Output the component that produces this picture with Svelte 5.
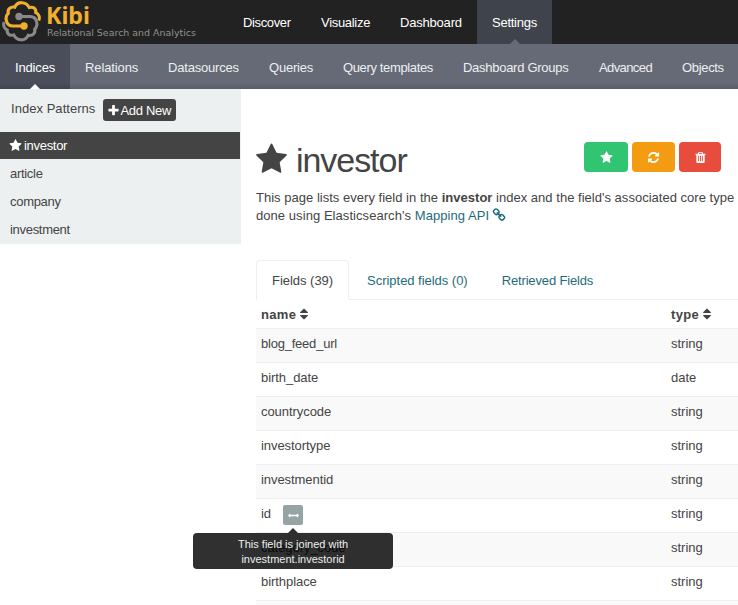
<script>
  const mainNav = [
    { label: 'Discover', width: 78, tracking: -0.37 },
    { label: 'Visualize', width: 79, tracking: -0.3 },
    { label: 'Dashboard', width: 92, tracking: -0.2 },
    { label: 'Settings', width: 75, tracking: -0.25 }
  ];
  const subNav = [
    { label: 'Indices', width: 70, tracking: -0.15 },
    { label: 'Relations', width: 83, tracking: -0.12 },
    { label: 'Datasources', width: 101, tracking: -0.2 },
    { label: 'Queries', width: 74, tracking: -0.22 },
    { label: 'Query templates', width: 120, tracking: -0.36 },
    { label: 'Dashboard Groups', width: 136, tracking: -0.28 },
    { label: 'Advanced', width: 83, tracking: -0.6 },
    { label: 'Objects', width: 72, tracking: -0.33 }
  ];
  const patterns = ['investor', 'article', 'company', 'investment'];
  const tabs = ['Fields (39)', 'Scripted fields (0)', 'Retrieved Fields'];
  const fields = [
    ['blog_feed_url', 'string'],
    ['birth_date', 'date'],
    ['countrycode', 'string'],
    ['investortype', 'string'],
    ['investmentid', 'string'],
    ['id', 'string'],
    ['category_code', 'string'],
    ['birthplace', 'string'],
    ['', '']
  ];
  const icons = {
    star: 'M1728 647q0 22-26 48l-363 354 86 500q1 7 1 20 0 21-10.5 35.5t-30.5 14.5q-19 0-40-12l-449-236-449 236q-22 12-40 12-21 0-31.5-14.5t-10.5-35.5q0-6 2-20l86-500-364-354q-25-27-25-48 0-37 56-46l502-73 225-455q19-41 49-41t49 41l225 455 502 73q56 9 56 46z',
    plus: 'M1600 736v192q0 40-28 68t-68 28h-416v416q0 40-28 68t-68 28h-192q-40 0-68-28t-28-68v-416h-416q-40 0-68-28t-28-68v-192q0-40 28-68t68-28h416v-416q0-40 28-68t68-28h192q40 0 68 28t28 68v416h416q40 0 68 28t28 68z',
    refresh: 'M1639 1056q0 5-1 7-64 268-268 434.5t-478 166.5q-146 0-282.5-55t-243.5-157l-129 129q-19 19-45 19t-45-19-19-45v-448q0-26 19-45t45-19h448q26 0 45 19t19 45-19 45l-137 137q71 66 161 102t187 36q134 0 250-65t186-179q11-17 53-117 8-23 30-23h192q13 0 22.5 9.5t9.5 22.5zm25-800v448q0 26-19 45t-45 19h-448q-26 0-45-19t-19-45 19-45l138-138q-148-137-349-137-134 0-250 65t-186 179q-11 17-53 117-8 23-30 23h-199q-13 0-22.5-9.5t-9.5-22.5v-7q65-268 270-434.5t480-166.5q146 0 284 55.5t245 156.5l130-129q19-19 45-19t45 19 19 45z',
    trash: 'M704 1376v-704q0-14-9-23t-23-9h-64q-14 0-23 9t-9 23v704q0 14 9 23t23 9h64q14 0 23-9t9-23zm256 0v-704q0-14-9-23t-23-9h-64q-14 0-23 9t-9 23v704q0 14 9 23t23 9h64q14 0 23-9t9-23zm256 0v-704q0-14-9-23t-23-9h-64q-14 0-23 9t-9 23v704q0 14 9 23t23 9h64q14 0 23-9t9-23zm-544-992h448l-48-117q-7-9-17-11h-317q-10 2-17 11zm928 32v64q0 14-9 23t-23 9h-96v948q0 83-47 143.5t-113 60.5h-832q-66 0-113-58.5t-47-141.5v-952h-96q-14 0-23-9t-9-23v-64q0-14 9-23t23-9h309l70-167q15-37 54-63t79-26h320q40 0 79 26t54 63l70 167h309q14 0 23 9t9 23z',
    sort: 'M1408 1088q0 26-19 45l-448 448q-19 19-45 19t-45-19l-448-448q-19-19-19-45t19-45 45-19h896q26 0 45 19t19 45zm0-384q0 26-19 45t-45 19h-896q-26 0-45-19t-19-45 19-45l448-448q19-19 45-19t45 19l448 448q19 19 19 45z',
    link: 'M1520 1216q0-40-28-68l-208-208q-28-28-68-28-42 0-72 32 3 3 19 18.5t21.5 21.5 15 19 13 25.5 3.5 27.5q0 40-28 68t-68 28q-15 0-27.5-3.5t-25.5-13-19-15-21.5-21.5-18.5-19q-33 31-33 73 0 40 28 68l206 207q27 27 68 27 40 0 68-26l147-146q28-28 28-67zm-703-705q0-40-28-68l-206-207q-28-28-68-28-39 0-68 27l-147 146q-28 28-28 67 0 40 28 68l208 208q27 27 68 27 42 0 72-31-3-3-19-18.5t-21.5-21.5-15-19-13-25.5-3.5-27.5q0-40 28-68t68-28q15 0 27.5 3.5t25.5 13 19 15 21.5 21.5 18.5 19q33-31 33-73zm895 705q0 120-85 203l-147 146q-83 83-203 83-121 0-204-85l-206-207q-83-83-83-203 0-123 88-209l-88-88q-86 88-208 88-120 0-204-84l-208-208q-84-84-84-204t85-203l147-146q83-83 203-83 121 0 204 85l206 207q83 83 83 203 0 123-88 209l88 88q86-88 208-88 120 0 204 84l208 208q84 84 84 204z',
    arrows: 'M1792 896q0 26-19 45l-256 256q-19 19-45 19t-45-19-19-45v-128h-1024v128q0 26-19 45t-45 19-45-19l-256-256q-19-19-19-45t19-45l256-256q19-19 45-19t45 19 19 45v128h1024v-128q0-26 19-45t45-19 45 19l256 256q19 19 19 45z'
  };
  const halfCloud = 'M38.8 20.5C40.3 17.5 39 14 35.8 12.6C36.3 8.5 33 6.4 29.3 7.6C26 1 17.5 1.2 14.8 7.2C10.5 6.2 7.3 9.3 8.3 13.3C4.6 16.5 5.4 26 13 26H24';
</script>

{#snippet icon(name)}
  <svg class="icon {name}" viewBox="0 0 1792 1792"><path d={icons[name]} /></svg>
{/snippet}

{#snippet navItem(item, current)}
  <div class="item" class:active={item.label === current} style="width: {item.width}px; letter-spacing: {item.tracking}px">{item.label}</div>
{/snippet}

<div class="app">
  <header class="top">
    <svg class="logo" width="228" height="44" viewBox="0 0 228 44">
      <g fill="none" stroke-width="3.1">
        <path stroke="#898989" transform="rotate(180 21.5 21.25)" d={halfCloud} />
        <path stroke="#f0b02e" d={halfCloud} />
      </g>
      <circle cx="19" cy="16.5" r="3.7" fill="#898989" />
      <circle cx="24" cy="26" r="3.7" fill="#f0b02e" />
      <text class="brand" x="46" y="24" textLength="44" lengthAdjust="spacingAndGlyphs">Kibi</text>
      <text class="tagline" x="47" y="35.5" textLength="149" lengthAdjust="spacingAndGlyphs">Relational Search and Analytics</text>
    </svg>
    <nav>
      {#each mainNav as item}{@render navItem(item, 'Settings')}{/each}
    </nav>
  </header>
  <nav class="sub">
    {#each subNav as item}{@render navItem(item, 'Indices')}{/each}
  </nav>
  <div class="body">
    <aside>
      <div class="side-head">Index Patterns <button>{@render icon('plus')}<span>Add New</span></button></div>
      {#each patterns as p, i}
        <div class="pattern" class:selected={i === 0}>
          {#if i === 0}{@render icon('star')}{/if}{p}
        </div>
      {/each}
    </aside>
    <main>
      <div class="title">
        <h1>{@render icon('star')}<span>investor</span></h1>
        <div class="actions">
          <button class="green">{@render icon('star')}</button>
          <button class="orange">{@render icon('refresh')}</button>
          <button class="red">{@render icon('trash')}</button>
        </div>
      </div>
      <p>
        <span class="l1">This page lists every field in the <b>investor</b> index and the field's associated core type</span><br />
        <span class="l2">done using Elasticsearch's <a>Mapping API {@render icon('link')}</a></span>
      </p>
      <div class="tabs">
        {#each tabs as t, i}
          <div class="tab" class:current={i === 0}>{t}</div>
        {/each}
      </div>
      <div class="row head">
        <div class="name">name {@render icon('sort')}</div>
        <div>type {@render icon('sort')}</div>
      </div>
      {#each fields as [name, type]}
        <div class="row">
          <div class="name">
            {name}
            {#if name === 'id'}
              <span class="join">
                {@render icon('arrows')}
                <span class="tooltip">This field is joined with investment.investorid</span>
              </span>
            {/if}
          </div>
          <div>{type}</div>
        </div>
      {/each}
    </main>
  </div>
</div>

<style>
  .app {
    width: 738px;
    height: 605px;
    overflow: hidden;
    background: #fff;
    color: #444;
    font: 13px/18px 'Liberation Sans', Arial, sans-serif;
  }
  .icon { width: 13px; height: 13px; fill: currentColor; flex: none; }
  button { border: 0; padding: 0; font: inherit; color: #fff; }
  .top { display: flex; height: 44px; background: #222; }
  .logo { flex: none; }
  .brand { font: bold 24px 'Noto Sans', sans-serif; fill: #f0b02e; }
  .tagline { font: 9.5px 'DejaVu Sans', sans-serif; fill: #909090; }
  nav { display: flex; }
  .item { position: relative; box-sizing: border-box; flex: none; padding-left: 15px; line-height: 45px; color: #fff; white-space: nowrap; }
  .top .active { background: #3f444c; }
  .item.active::after {
    content: '';
    position: absolute;
    left: 50%;
    bottom: 0;
    margin-left: -5px;
    border: 5px solid transparent;
    border-top: 0;
    border-bottom-color: #656a76;
  }
  .sub { height: 45px; background: linear-gradient(#656a76 0, #656a76 39px, #595d68 45px); }
  .sub .item { color: #ecf0f1; line-height: 47px; height: 45px; }
  .sub .active { background: linear-gradient(#494e5a 39px, #41454f); color: #fff; }
  .sub .active::after { border-bottom-color: #fff; }
  .body { display: flex; align-items: flex-start; }
  aside { width: 241px; height: 155px; flex: none; background: #ecf0f1; letter-spacing: -.3px; }
  .side-head { display: flex; height: 43px; padding-left: 11px; gap: 8px; line-height: 39px; letter-spacing: .04px; }
  .side-head button {
    display: flex;
    align-items: center;
    box-sizing: border-box;
    height: 22px;
    width: 73px;
    margin-top: 10px;
    padding: 1px 0 0 4px;
    border-radius: 3px;
    background: #444;
    line-height: 22px;
    letter-spacing: -.3px;
    white-space: nowrap;
  }
  .side-head span { padding-top: 1px; }
  .pattern { display: flex; align-items: center; height: 28px; padding-left: 10px; line-height: 28px; }
  .pattern.selected { width: 230px; height: 27px; margin-bottom: 1px; background: #444; color: #fff; gap: 2px; }
  .pattern.selected .icon { margin-left: -1px; }
  main { flex: 1; min-width: 0; padding-left: 15px; }
  .title { display: flex; justify-content: space-between; padding: 53px 17px 0 0; height: 47px; }
  h1 { display: flex; align-items: center; margin: 0; height: 36px; font-size: 34px; font-weight: normal; line-height: 36px; letter-spacing: -1.05px; }
  h1 .icon { width: 33px; height: 33px; margin: -2px 8px 0 -1px; }
  .actions { display: flex; gap: 4px; }
  .actions button { display: flex; align-items: center; justify-content: center; height: 30px; border-radius: 4px; }
  .actions .green { width: 44px; background: #31c471; }
  .actions .orange { width: 43px; background: #f39c12; }
  .actions .red { width: 42px; background: #e74c3c; }
  p { margin: 0; white-space: nowrap; }
  .l1 { letter-spacing: .02px; }
  .l2 { letter-spacing: .06px; }
  a { color: #1f6b7a; }
  a .icon { width: 14px; height: 14px; vertical-align: -2px; margin-left: -1px; }
  .tabs { display: flex; height: 39px; margin-top: 35px; border-bottom: 1px solid #ecf0f1; }
  .tab { padding: 0 15px; margin-right: 2px; border: 1px solid transparent; line-height: 39px; height: 39px; color: #1f6b7a; letter-spacing: -.03px; }
  .tab:last-child { letter-spacing: -.15px; }
  .tab.current { height: 38px; color: #444; border-color: #ecf0f1; border-bottom-color: #fff; border-radius: 4px 4px 0 0; background: #fff; }
  .row { display: flex; box-sizing: border-box; height: 34px; padding: 6px 0 0 5px; border-top: 1px solid #ecf0f1; }
  .row:nth-child(odd) { background: #f9f9f9; }
  .row .name { width: 410px; flex: none; letter-spacing: -.06px; }
  .row:nth-child(5) .name { letter-spacing: -.22px; }
  .row.head { height: 28px; border: 0; font-weight: bold; }
  .row.head div { letter-spacing: .35px; }
  .row.head .icon { width: 14px; height: 14px; vertical-align: -2px; margin-left: -3px; }
  .join {
    position: relative;
    display: inline-flex;
    align-items: center;
    justify-content: center;
    width: 20px;
    height: 20px;
    margin-left: 8.5px;
    border-radius: 2px;
    background: #95a5a6;
    color: #fff;
    letter-spacing: 0;
    vertical-align: top;
  }
  .join .icon { width: 11px; height: 11px; }
  .tooltip {
    position: absolute;
    z-index: 2;
    top: 28px;
    left: -90px;
    box-sizing: border-box;
    width: 200px;
    height: 36px;
    padding: 4px 40px 0;
    border-radius: 4px;
    background: rgba(0, 0, 0, .81);
    color: #ecf0f1;
    font-size: 11px;
    line-height: 15px;
    text-align: center;
  }
  .tooltip::before {
    content: '';
    position: absolute;
    left: 95px;
    top: -5px;
    border: 5px solid transparent;
    border-top: 0;
    border-bottom-color: rgba(0, 0, 0, .81);
  }
</style>
